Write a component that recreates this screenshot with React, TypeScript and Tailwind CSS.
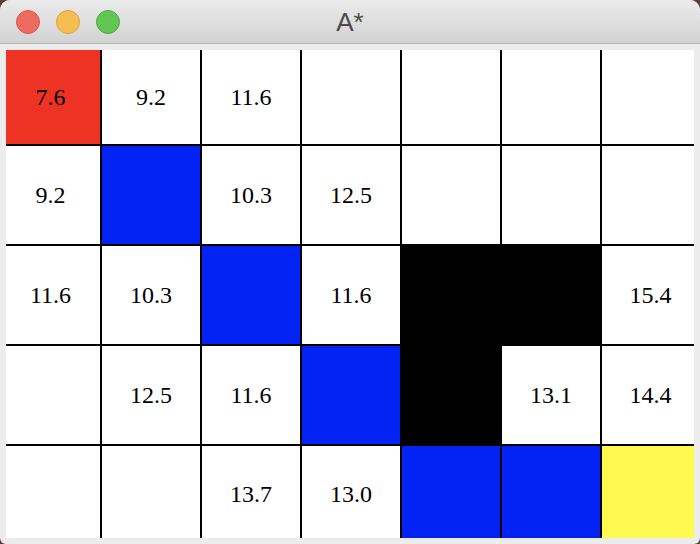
type Cell = { v?: string; c?: "red" | "blue" | "black" | "yellow" };

const grid: Cell[][] = [
  [{ v: "7.6", c: "red" }, { v: "9.2" }, { v: "11.6" }, {}, {}, {}, {}],
  [{ v: "9.2" }, { c: "blue" }, { v: "10.3" }, { v: "12.5" }, {}, {}, {}],
  [{ v: "11.6" }, { v: "10.3" }, { c: "blue" }, { v: "11.6" }, { c: "black" }, { c: "black" }, { v: "15.4" }],
  [{}, { v: "12.5" }, { v: "11.6" }, { c: "blue" }, { c: "black" }, { v: "13.1" }, { v: "14.4" }],
  [{}, {}, { v: "13.7" }, { v: "13.0" }, { c: "blue" }, { c: "blue" }, { c: "yellow" }],
];

const fills = {
  red: "bg-[#ee3223]",
  blue: "bg-[#0323f5]",
  black: "bg-black",
  yellow: "bg-[#fffa50]",
};

function GridCell({ cell, row, col }: { cell: Cell; row: number; col: number }) {
  const fill = cell.c ? fills[cell.c] : "bg-white";
  const padX = col === 0 ? "pr-[5px]" : col === 6 ? "pl-[5px]" : "";
  const padY = row === 4 ? "pt-[3px]" : "";
  return (
    <div className={`${fill} ${padX} ${padY} flex items-center justify-center`}>
      {cell.v && (
        <span className="text-[24px] text-black font-['Liberation_Serif',serif]">{cell.v}</span>
      )}
    </div>
  );
}

export default function App() {
  return (
    <div className="w-[700px] h-[544px] bg-[#5a3e3a] overflow-hidden">
      <div className="w-full h-full rounded-t-[10px] rounded-b-[6px] overflow-hidden bg-[#ececec] flex flex-col">
        <div className="h-[44px] shrink-0 relative flex items-center justify-center bg-gradient-to-b from-[#ebebeb] to-[#d2d2d2] border-b border-[#b3b3b3]">
          <div className="absolute left-[16px] top-[10px] flex gap-[16px]">
            <span className="w-[24px] h-[24px] rounded-full bg-[#ee6b60] border border-[#d85a4f]" />
            <span className="w-[24px] h-[24px] rounded-full bg-[#f6be50] border border-[#dca33a]" />
            <span className="w-[24px] h-[24px] rounded-full bg-[#62c655] border border-[#4fa844]" />
          </div>
          <span className="text-[26px] text-[#4b4b4b] font-['Liberation_Sans',sans-serif] leading-none">A*</span>
        </div>
        <div className="pt-[6px] pl-[6px]">
          <div className="grid bg-black gap-[2px] w-[688px] h-[488px] grid-cols-[94px_repeat(5,98px)_92px] grid-rows-[94px_repeat(3,98px)_92px]">
            {grid.map((r, ri) =>
              r.map((cell, ci) => <GridCell key={`${ri}-${ci}`} cell={cell} row={ri} col={ci} />)
            )}
          </div>
        </div>
      </div>
    </div>
  );
}
